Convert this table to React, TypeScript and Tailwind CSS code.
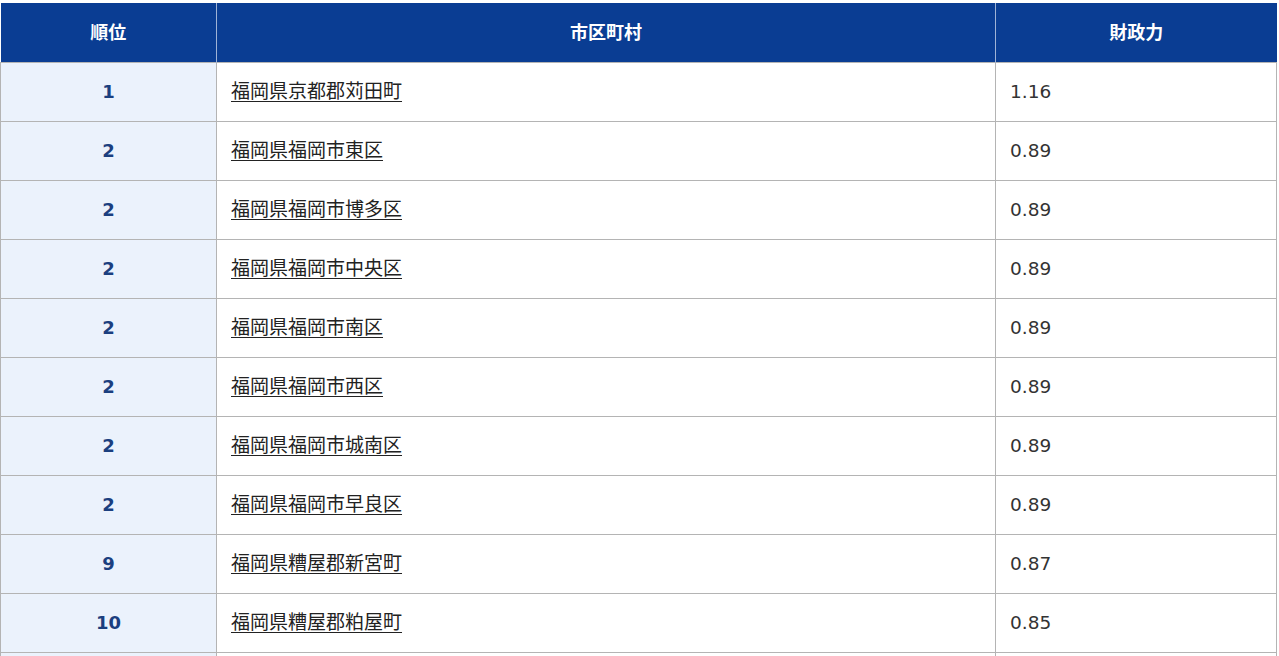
import React from "react";

const ROWS = [
  { rank: 1, name: "福岡県京都郡苅田町", value: "1.16" },
  { rank: 2, name: "福岡県福岡市東区", value: "0.89" },
  { rank: 2, name: "福岡県福岡市博多区", value: "0.89" },
  { rank: 2, name: "福岡県福岡市中央区", value: "0.89" },
  { rank: 2, name: "福岡県福岡市南区", value: "0.89" },
  { rank: 2, name: "福岡県福岡市西区", value: "0.89" },
  { rank: 2, name: "福岡県福岡市城南区", value: "0.89" },
  { rank: 2, name: "福岡県福岡市早良区", value: "0.89" },
  { rank: 9, name: "福岡県糟屋郡新宮町", value: "0.87" },
  { rank: 10, name: "福岡県糟屋郡粕屋町", value: "0.85" },
];

const App = () => {
  return (
    <div
      className="w-[1279px] h-[656px] overflow-hidden bg-white pt-[3px]"
      style={{ fontFamily: '"DejaVu Sans", "Noto Sans CJK JP", sans-serif' }}
    >
      <table className="table-fixed border-collapse w-[1277px] text-[17px]">
        <colgroup>
          <col className="w-[216px]" />
          <col className="w-[779px]" />
          <col />
        </colgroup>
        <thead>
          <tr className="h-[59px] bg-[#0a3d93] text-white">
            <th className="border-r border-[#9fb3d6] font-bold text-[18px]">順位</th>
            <th className="border-r border-[#9fb3d6] font-bold text-[18px]">市区町村</th>
            <th className="font-bold text-[18px]">財政力</th>
          </tr>
        </thead>
        <tbody>
          {ROWS.map((row, i) => (
            <tr key={i} className="h-[59px]">
              <td className="border border-[#b4b4b4] bg-[#ebf2fc] text-center font-bold text-[#1b3f7f] text-[18px]">
                {row.rank}
              </td>
              <td className="border border-[#b4b4b4] pl-[14px] text-[#222] text-[19px]">
                <a href="#" className="underline underline-offset-[3px]">
                  {row.name}
                </a>
              </td>
              <td className="border border-[#b4b4b4] pl-[14px] text-[#333] text-[18.5px]">
                {row.value}
              </td>
            </tr>
          ))}
          {/* next row, only its top edge is in view */}
          <tr className="h-[59px]">
            <td className="border border-[#b4b4b4] bg-[#ebf2fc]" />
            <td className="border border-[#b4b4b4]" />
            <td className="border border-[#b4b4b4]" />
          </tr>
        </tbody>
      </table>
    </div>
  );
};

export default App;
